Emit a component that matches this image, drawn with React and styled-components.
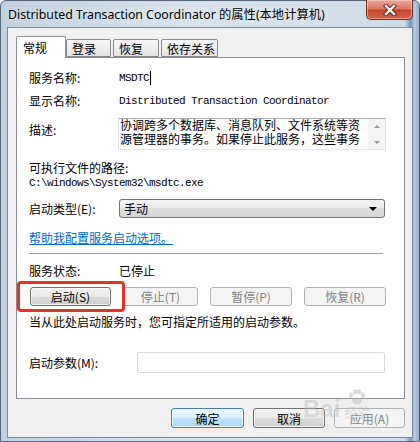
import React from "react";
import styled, { createGlobalStyle } from "styled-components";

const GlobalStyle = createGlobalStyle`
  html, body { margin: 0; padding: 0; }
  body {
    width: 420px; height: 442px; overflow: hidden; background: #fff;
    font-family: "Noto Sans CJK SC", "Noto Sans", sans-serif;
  }
  * { box-sizing: border-box; }
`;

const Window = styled.div`
  position: relative;
  width: 420px;
  height: 442px;
  display: flex;
  flex-direction: column;
  border: 1px solid #52667c;
  border-radius: 6px 6px 0 0;
  padding: 0 6px 3px 6px;
  background: linear-gradient(to right, #c2d1df 0%, #d9e3ec 45%, #d0dce8 96.5%, #7896bb 98%, #b9cde1 99%, #8ea9c8 100%);
`;

const TitleBar = styled.div`
  height: 26px;
  display: flex;
  align-items: flex-start;
`;

const TitleText = styled.div`
  margin: 6px 0 0 1px;
  font-family: "Noto Sans", "Noto Sans CJK SC", sans-serif;
  font-size: 12.3px;
  line-height: 16px;
  color: #000;
  text-shadow: 0 0 6px rgba(255, 255, 255, 0.9);
  white-space: nowrap;
`;

const CloseButton = styled.div`
  margin-left: auto;
  margin-top: -1px;
  width: 47px;
  height: 20px;
  border: 1px solid #6e2c22;
  border-top: none;
  border-radius: 0 0 5px 5px;
  background: linear-gradient(#e9a698 0%, #dc7c66 45%, #c7432b 55%, #d2664c 100%);
  box-shadow: inset 0 0 0 1px rgba(255, 220, 210, 0.5);
  display: flex;
  align-items: center;
  justify-content: center;
`;

const Client = styled.div`
  flex: 1;
  display: flex;
  flex-direction: column;
  background: #f0f0f0;
  border: 1px solid #7d8a98;
  padding: 8px 7px 0 8px;
`;

const TabBar = styled.div`
  display: flex;
  align-items: flex-end;
  height: 21px;
`;

const Tab = styled.div`
  position: relative;
  z-index: ${(p) => (p.$active ? 1 : 0)};
  width: ${(p) => p.$w}px;
  height: ${(p) => (p.$active ? 22 : 18)}px;
  margin-bottom: ${(p) => (p.$active ? -1 : 0)}px;
  margin-left: ${(p) => p.$ml || 0}px;
  padding-left: ${(p) => (p.$active ? 6 : 5)}px;
  padding-top: ${(p) => (p.$active ? 3 : 1)}px;
  border: 1px solid #898c95;
  border-bottom: ${(p) => (p.$active ? "none" : "1px solid #898c95")};
  border-radius: 2px 2px 0 0;
  background: ${(p) => (p.$active ? "#fff" : "linear-gradient(#f7f7f7, #e3e3e3)")};
  font-size: 12px;
  line-height: 15px;
  color: #000;
  white-space: nowrap;
`;

const Panel = styled.div`
  height: 342px;
  border: 1px solid #898c95;
  background: #fff;
  padding: 0 18px 0 12px;
  display: flex;
  flex-direction: column;
`;

const Row = styled.div`
  display: flex;
  align-items: ${(p) => (p.$top ? "flex-start" : "center")};
  margin-top: ${(p) => p.$mt}px;
  min-height: ${(p) => p.$h || 14}px;
  font-size: 12px;
  line-height: 14px;
  color: #000;
  white-space: nowrap;
`;

const Label = styled.span`
  flex: none;
  width: ${(p) => p.$w || 90}px;
  margin-top: ${(p) => p.$mt || 0}px;
`;

const Mono = styled.span`
  font-family: "Liberation Mono", "DejaVu Sans Mono", monospace;
  font-size: 11px;
  letter-spacing: -0.6px;
  line-height: 14px;
  color: #000;
  display: inline-flex;
  align-items: center;
`;

const Caret = styled.span`
  display: inline-block;
  width: 1px;
  height: 14px;
  background: #000;
  margin-left: 1px;
`;

const DescBox = styled.div`
  display: flex;
  width: 270px;
  height: 32px;
  margin-left: -1px;
  border: 1px solid #abadb3;
  border-left-color: #dbdfe6;
  border-right-color: #dbdfe6;
  border-bottom-color: #e3e9ef;
  background: #fff;
`;

const DescText = styled.div`
  flex: 1;
  padding-left: 1px;
  font-size: 12px;
  line-height: 14px;
  margin-top: -1px;
`;

const ScrollBar = styled.div`
  width: 17px;
  flex: none;
  background: #f4f4f4;
  display: flex;
  flex-direction: column;
  align-items: center;
  justify-content: space-between;
  padding: 6px 0 5px;
`;

const Arrow = styled.span`
  width: 0;
  height: 0;
  border-left: 3px solid transparent;
  border-right: 3px solid transparent;
  ${(p) => (p.$up ? "border-bottom: 3px solid #9a9a9a;" : "border-top: 3px solid #9a9a9a;")}
`;

const Select = styled.div`
  width: 266px;
  height: 19px;
  border: 1px solid #707070;
  border-radius: 3px;
  background: linear-gradient(#f4f4f4 0%, #ececec 50%, #dedede 50%, #d6d6d6 100%);
  display: flex;
  align-items: center;
  padding: 0 7px 0 4px;
  font-size: 12px;
`;

const SelectArrow = styled.span`
  margin-left: auto;
  width: 0;
  height: 0;
  border-left: 4px solid transparent;
  border-right: 4px solid transparent;
  border-top: 4px solid #000;
`;

const Link = styled.a`
  margin-top: 13px;
  font-size: 12px;
  line-height: 14px;
  color: #0066cc;
  text-decoration: underline;
  cursor: pointer;
`;

const Separator = styled.div`
  margin-top: 8px;
  height: 1px;
  width: 354px;
  background: #a0a0a0;
`;

const ButtonRow = styled.div`
  position: relative;
  display: flex;
  justify-content: space-between;
  margin-top: 9px;
  padding-left: 1px;
`;

const Button = styled.div`
  width: ${(p) => p.$w}px;
  height: ${(p) => p.$h || 19}px;
  border: 1px solid ${(p) => (p.$disabled ? "#adb2b5" : p.$default ? "#3c7fb1" : "#707070")};
  border-radius: 3px;
  background: ${(p) =>
    p.$disabled
      ? "#f4f4f4"
      : p.$default
      ? "linear-gradient(#eaf6fd 0%, #d9f0fc 50%, #bee6fd 50%, #a7d9f5 100%)"
      : "linear-gradient(#f2f2f2 0%, #ebebeb 50%, #dddddd 50%, #cfcfcf 100%)"};
  box-shadow: ${(p) => (p.$disabled ? "none" : "inset 0 0 0 1px rgba(255,255,255,0.7)")};
  color: ${(p) => (p.$disabled ? "#838383" : "#000")};
  font-size: 12px;
  display: flex;
  align-items: center;
  justify-content: center;
  white-space: nowrap;
`;

const Highlight = styled.div`
  position: absolute;
  left: -12px;
  top: -6px;
  width: 108px;
  height: 31px;
  border: 3px solid #e8302a;
  border-radius: 4px;
  pointer-events: none;
`;

const Note = styled.div`
  margin-top: 9px;
  font-size: 12px;
  line-height: 14px;
  white-space: nowrap;
`;

const Input = styled.div`
  width: 248px;
  height: 21px;
  border: 1px solid #d5d9de;
  border-radius: 2px;
  background: #fff;
`;

const BottomBar = styled.div`
  display: flex;
  justify-content: flex-end;
  gap: 9px;
  margin-top: 9px;
`;

const Watermark = styled.div`
  position: absolute;
  left: 302px;
  top: 388px;
  display: flex;
  align-items: flex-end;
  gap: 4px;
  color: rgba(185, 185, 185, 0.45);
  pointer-events: none;
`;

const WmBig = styled.span`
  font-family: "Liberation Sans", Arial, sans-serif;
  font-weight: bold;
  font-size: 24px;
  line-height: 28px;
`;

const WmSide = styled.div`
  display: flex;
  flex-direction: column;
  align-items: center;
  font-size: 13px;
  line-height: 14px;
  margin-bottom: 4px;
`;

function CloseGlyph() {
  return (
    <svg width="14" height="12" viewBox="0 0 14 12">
      <path d="M3 2 L11 10 M11 2 L3 10" stroke="#5a1d14" strokeWidth="4.2" strokeLinecap="square" fill="none" />
      <path d="M3 2 L11 10 M11 2 L3 10" stroke="#ffffff" strokeWidth="2.4" strokeLinecap="square" fill="none" />
    </svg>
  );
}

function Paw() {
  return (
    <svg width="22" height="16" viewBox="0 0 22 16">
      <g fill="rgba(185,185,185,0.5)">
        <ellipse cx="5" cy="6" rx="2.2" ry="2.8" />
        <ellipse cx="9" cy="3" rx="2.2" ry="2.8" />
        <ellipse cx="13" cy="3" rx="2.2" ry="2.8" />
        <ellipse cx="17" cy="6" rx="2.2" ry="2.8" />
        <ellipse cx="11" cy="12" rx="5" ry="3.6" />
      </g>
    </svg>
  );
}

export default function App() {
  return (
    <>
      <GlobalStyle />
      <Window>
        <TitleBar>
          <TitleText>Distributed Transaction Coordinator 的属性(本地计算机)</TitleText>
          <CloseButton>
            <CloseGlyph />
          </CloseButton>
        </TitleBar>
        <Client>
          <TabBar>
            <Tab $active $w={50}>常规</Tab>
            <Tab $w={45}>登录</Tab>
            <Tab $w={46} $ml={2}>恢复</Tab>
            <Tab $w={57} $ml={2}>依存关系</Tab>
          </TabBar>
          <Panel>
            <Row $mt={13}>
              <Label>服务名称:</Label>
              <Mono>
                MSDTC
                <Caret />
              </Mono>
            </Row>
            <Row $mt={9}>
              <Label>显示名称:</Label>
              <Mono>Distributed Transaction Coordinator</Mono>
            </Row>
            <Row $mt={10} $h={32} $top>
              <Label $mt={5}>描述:</Label>
              <DescBox>
                <DescText>
                  <div>协调跨多个数据库、消息队列、文件系统等资</div>
                  <div>源管理器的事务。如果停止此服务，这些事务</div>
                </DescText>
                <ScrollBar>
                  <Arrow $up />
                  <Arrow />
                </ScrollBar>
              </DescBox>
            </Row>
            <Row $mt={11}>
              <Label $w={200}>可执行文件的路径:</Label>
            </Row>
            <Row $mt={1}>
              <Mono>C:\windows\System32\msdtc.exe</Mono>
            </Row>
            <Row $mt={9} $h={19}>
              <Label>启动类型(E):</Label>
              <Select>
                手动
                <SelectArrow />
              </Select>
            </Row>
            <Link>帮助我配置服务启动选项。</Link>
            <Separator />
            <Row $mt={10}>
              <Label>服务状态:</Label>
              <span>已停止</span>
            </Row>
            <ButtonRow>
              <Button $w={81}>启动(S)</Button>
              <Button $w={75} $disabled>停止(T)</Button>
              <Button $w={82} $disabled>暂停(P)</Button>
              <Button $w={82} $disabled>恢复(R)</Button>
              <Highlight />
            </ButtonRow>
            <Note>当从此处启动服务时，您可指定所适用的启动参数。</Note>
            <Row $mt={23} $h={21}>
              <Label $w={108}>启动参数(M):</Label>
              <Input />
            </Row>
          </Panel>
          <BottomBar>
            <Button $w={73} $h={20} $default>确定</Button>
            <Button $w={72} $h={20}>取消</Button>
            <Button $w={71} $h={20} $disabled>应用(A)</Button>
          </BottomBar>
        </Client>
        <Watermark>
          <WmBig>Bai</WmBig>
          <WmSide>
            <Paw />
            <span>经验</span>
          </WmSide>
        </Watermark>
      </Window>
    </>
  );
}
